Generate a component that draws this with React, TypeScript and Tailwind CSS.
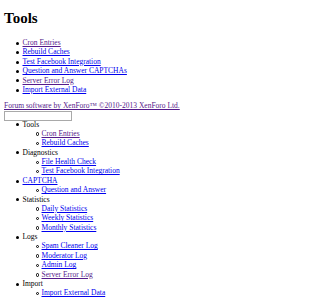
const V = "text-[#551a8b] underline";
const B = "text-[#0000ee] underline";

const topLinks = [
  { label: "Cron Entries", c: V },
  { label: "Rebuild Caches", c: B },
  { label: "Test Facebook Integration", c: B },
  { label: "Question and Answer CAPTCHAs", c: B },
  { label: "Server Error Log", c: V },
  { label: "Import External Data", c: B },
];

const nav = [
  { title: "Tools", link: false, items: [{ label: "Cron Entries", c: V }, { label: "Rebuild Caches", c: B }] },
  { title: "Diagnostics", link: false, items: [{ label: "File Health Check", c: B }, { label: "Test Facebook Integration", c: B }] },
  { title: "CAPTCHA", link: true, items: [{ label: "Question and Answer", c: B }] },
  {
    title: "Statistics",
    link: false,
    items: [
      { label: "Daily Statistics", c: B },
      { label: "Weekly Statistics", c: B },
      { label: "Monthly Statistics", c: B },
    ],
  },
  {
    title: "Logs",
    link: false,
    items: [
      { label: "Spam Cleaner Log", c: B },
      { label: "Moderator Log", c: B },
      { label: "Admin Log", c: B },
      { label: "Server Error Log", c: V },
    ],
  },
  { title: "Import", link: false, items: [{ label: "Import External Data", c: B }] },
];

function Disc() {
  return <span className="inline-block w-[3px] h-[3px] rounded-full bg-black align-middle mr-[4px]" />;
}

function Circle() {
  return (
    <span className="inline-block w-[3.5px] h-[3.5px] rounded-full border-[0.75px] border-black align-middle mr-[2.25px]" />
  );
}

export default function App() {
  return (
    <div className="bg-white text-black font-['Liberation_Serif',serif] text-[7.5px] leading-[9.38px] px-[4px] pt-px">
      <h1 className="text-[15px] font-bold leading-[normal] mt-[9px] mb-[10px]">Tools</h1>

      <ul className="pl-[18.5px] mt-[11px] mb-[6.9px]">
        {topLinks.map((l) => (
          <li key={l.label} className="-ml-[7px]">
            <Disc />
            <a href="#" className={l.c}>
              {l.label}
            </a>
          </li>
        ))}
      </ul>

      <div>
        <a href="#" className={V}>
          Forum software by XenForo™ ©2010-2013 XenForo Ltd.
        </a>
      </div>

      <div className="flex">
        <input type="text" className="w-[68px] h-[10px] border border-[#a9a9a9] bg-white" />
      </div>

      <ul className="pl-[18.5px] -mt-[1px]">
        {nav.map((g) => (
          <li key={g.title} className="-ml-[7px]">
            <Disc />
            {g.link ? (
              <a href="#" className={B}>
                {g.title}
              </a>
            ) : (
              g.title
            )}
            <ul className="pl-[26px]">
              {g.items.map((i) => (
                <li key={i.label} className="-ml-[5.75px]">
                  <Circle />
                  <a href="#" className={i.c}>
                    {i.label}
                  </a>
                </li>
              ))}
            </ul>
          </li>
        ))}
      </ul>
    </div>
  );
}
